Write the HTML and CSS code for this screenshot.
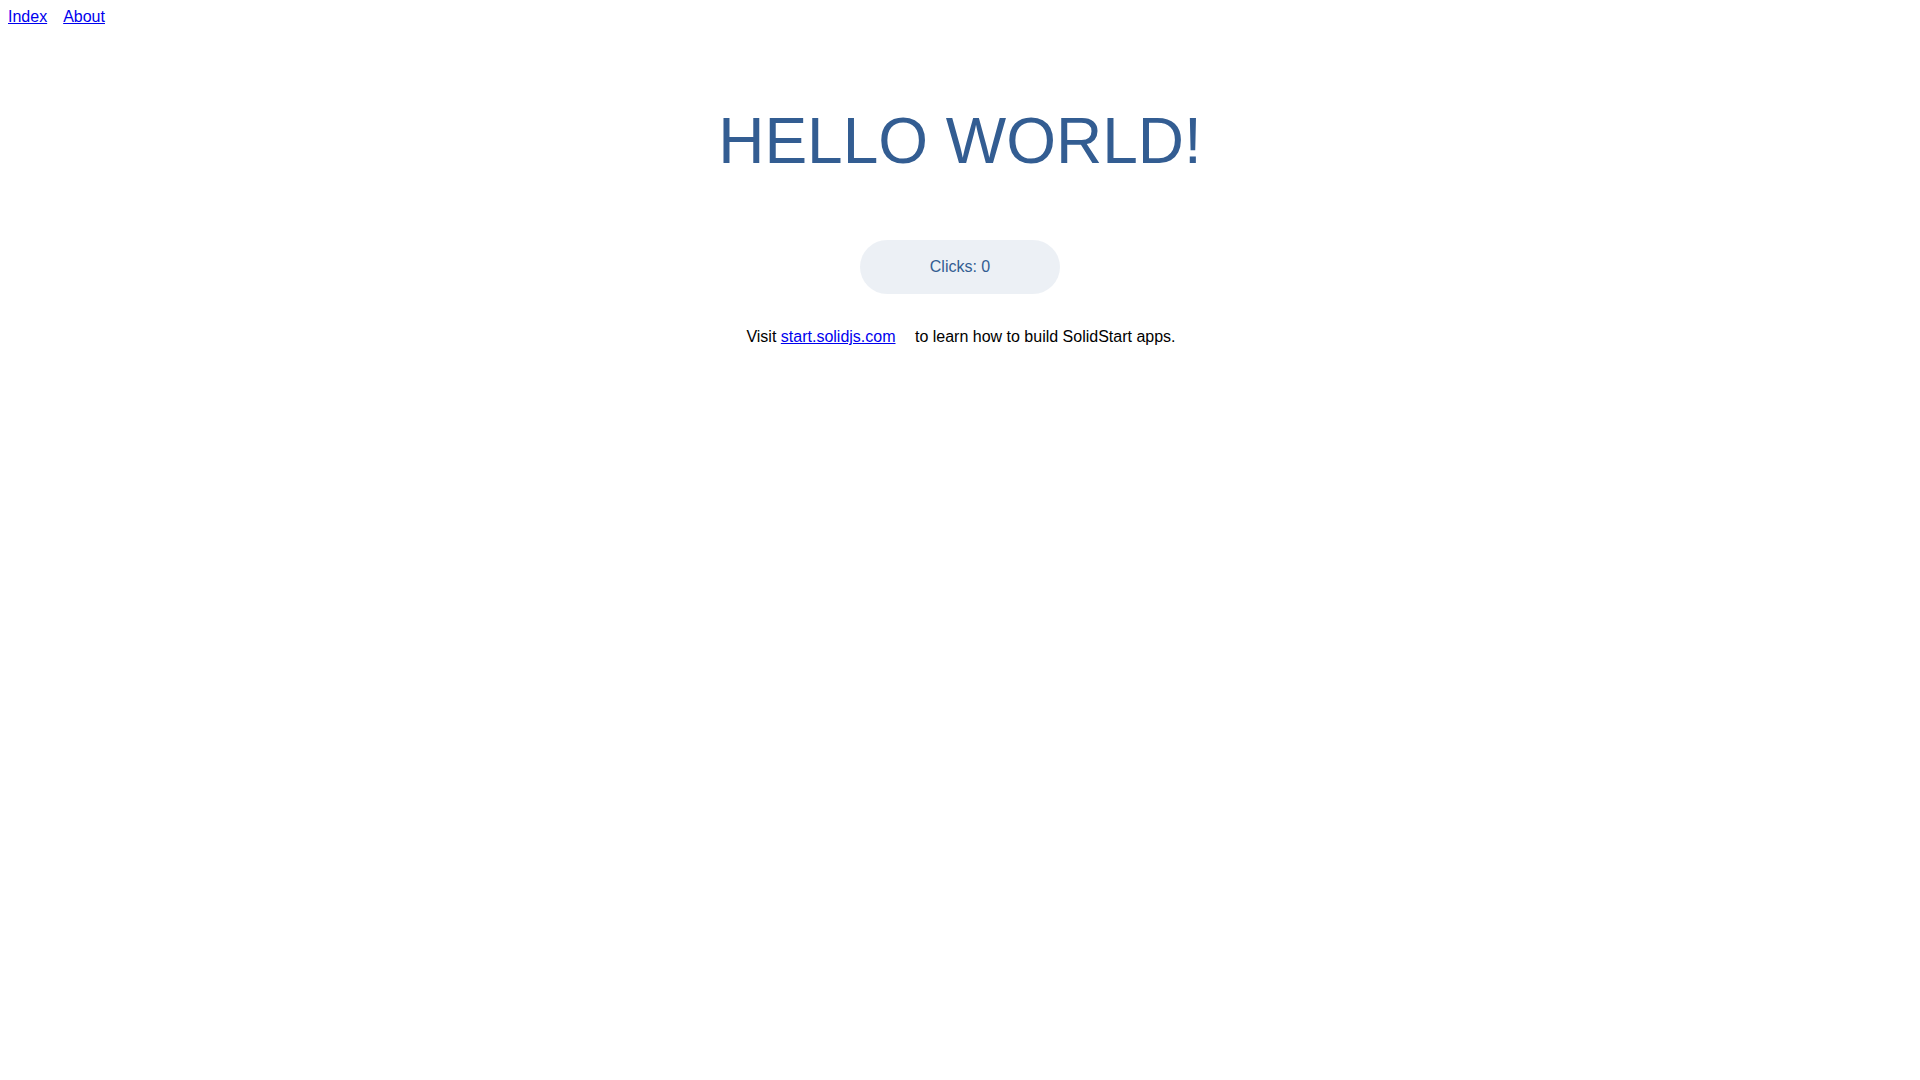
FILE: index.html
```html
<!DOCTYPE html>
<html lang="en">
<head>
<meta charset="utf-8">
<title>SolidStart - Basic</title>
<link rel="stylesheet" href="styles.css">
</head>
<body>
<nav class="topnav">
  <a class="navlink" href="#">Index</a>
  <a class="navlink" href="#">About</a>
</nav>
<main class="main">
  <h1 class="title">Hello world!</h1>
  <button class="increment" type="button">Clicks: 0</button>
  <p class="visit">Visit <a class="extlink" href="#">start.solidjs.com</a><span class="gap"></span> to learn how to build SolidStart apps.</p>
</main>
</body>
</html>
```

FILE: styles.css
```css
html, body {
  font-family: "Liberation Sans", Arial, sans-serif;
  font-size: 16px;
  color: #000;
  background: #fff;
}

body {
  margin: 8px;
}

.topnav {
  display: flex;
  gap: 16px;
  line-height: 18px;
}

.navlink {
  color: #0000ee;
  text-decoration: underline;
}

.main {
  text-align: center;
  padding: 1em;
  margin: 0 auto;
}

.title {
  color: #335d92;
  text-transform: uppercase;
  font-size: 4rem;
  font-weight: normal;
  line-height: 1.1;
  margin: 4rem auto;
}

.increment {
  font-family: inherit;
  font-size: inherit;
  line-height: 17.6px;
  padding: 1em 2em;
  color: #335d92;
  background-color: rgba(68, 107, 158, 0.1);
  border-radius: 2em;
  border: 2px solid rgba(68, 107, 158, 0);
  outline: none;
  width: 200px;
  font-variant-numeric: tabular-nums;
  cursor: pointer;
}

.visit {
  margin: 2rem auto;
  padding-left: 2px;
  line-height: 1.35;
}

.extlink {
  color: #0000ee;
  text-decoration: underline;
}

.gap {
  display: inline-block;
  width: 15px;
}
```
